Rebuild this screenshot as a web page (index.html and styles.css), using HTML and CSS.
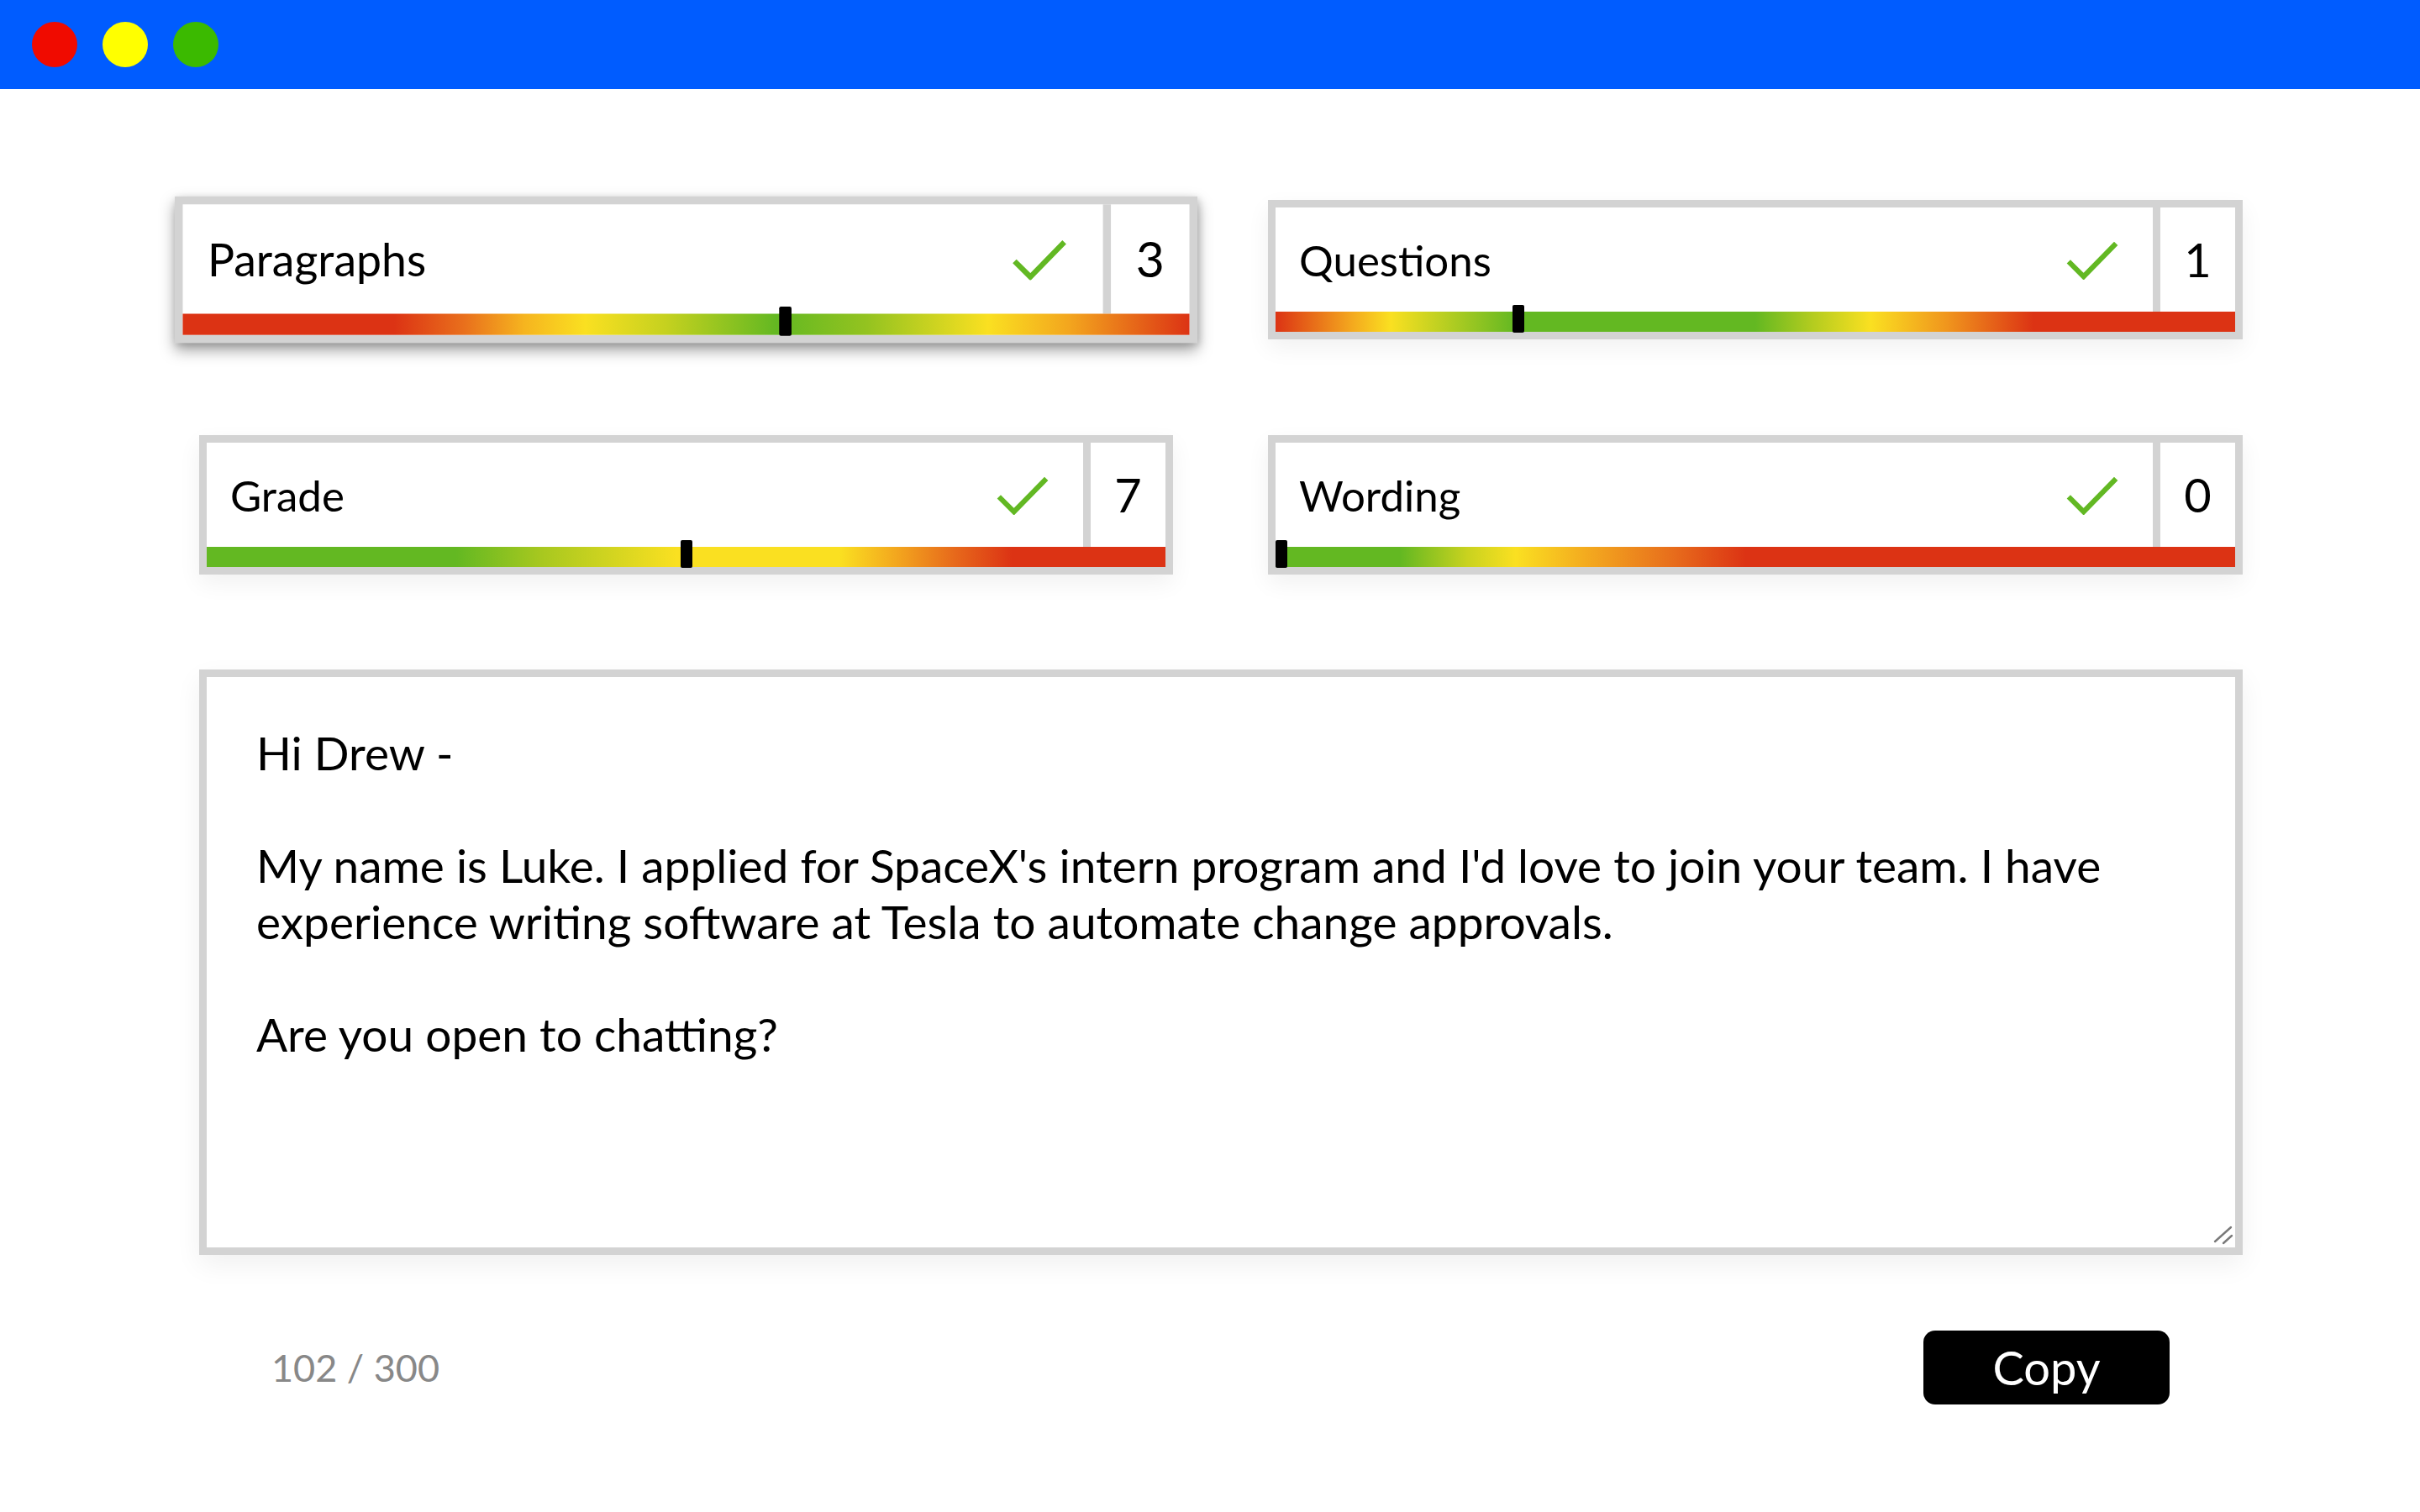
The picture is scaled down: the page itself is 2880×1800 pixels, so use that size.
FILE: index.html
```html
<!DOCTYPE html>
<html lang="en">
<head>
<meta charset="utf-8">
<title>Message checker</title>
<link rel="stylesheet" href="styles.css">
</head>
<body>
<header class="titlebar">
  <span class="dot dot-red"></span>
  <span class="dot dot-yellow"></span>
  <span class="dot dot-green"></span>
</header>
<main class="page">
  <section class="metrics">
    <div class="card card-active">
      <div class="card-top">
        <div class="label-cell">
          <span class="label">Paragraphs</span>
          <svg class="check" viewBox="0 0 66 50"><polyline points="3,27 22,46 63,4"/></svg>
        </div>
        <div class="num-cell">3</div>
      </div>
      <div class="bar bar-paragraphs"><span class="marker" style="--pos:0.6"></span></div>
    </div>
    <div class="card">
      <div class="card-top">
        <div class="label-cell">
          <span class="label">Questions</span>
          <svg class="check" viewBox="0 0 66 50"><polyline points="3,27 22,46 63,4"/></svg>
        </div>
        <div class="num-cell">1</div>
      </div>
      <div class="bar bar-questions"><span class="marker" style="--pos:0.25"></span></div>
    </div>
    <div class="card">
      <div class="card-top">
        <div class="label-cell">
          <span class="label">Grade</span>
          <svg class="check" viewBox="0 0 66 50"><polyline points="3,27 22,46 63,4"/></svg>
        </div>
        <div class="num-cell">7</div>
      </div>
      <div class="bar bar-grade"><span class="marker" style="--pos:0.5"></span></div>
    </div>
    <div class="card">
      <div class="card-top">
        <div class="label-cell">
          <span class="label">Wording</span>
          <svg class="check" viewBox="0 0 66 50"><polyline points="3,27 22,46 63,4"/></svg>
        </div>
        <div class="num-cell">0</div>
      </div>
      <div class="bar bar-wording"><span class="marker" style="--pos:0"></span></div>
    </div>
  </section>
  <div class="editor-wrap">
    <textarea class="editor" spellcheck="false">Hi Drew -

My name is Luke. I applied for SpaceX's intern program and I'd love to join your team. I have experience writing software at Tesla to automate change approvals.

Are you open to chatting?</textarea>
    <svg class="grip" viewBox="0 0 26 26"><line x1="2" y1="19" x2="21" y2="2"/><line x1="12" y1="21" x2="22" y2="12"/></svg>
  </div>
  <footer class="footer">
    <span class="count">102 / 300</span>
    <button class="copy-btn" type="button">Copy</button>
  </footer>
</main>
</body>
</html>
```

FILE: styles.css
```css
html, body {
  margin: 0;
  padding: 0;
  background: #ffffff;
}

body {
  font-family: Lato, "Open Sans", Arial, sans-serif;
  color: #000;
}

.titlebar {
  height: 106px;
  background: #005cff;
  display: flex;
  align-items: center;
  gap: 30px;
  padding-left: 38px;
  box-sizing: border-box;
}

.dot {
  width: 54px;
  height: 54px;
  border-radius: 50%;
  display: block;
}

.dot-red { background: #f00b00; }
.dot-yellow { background: #ffff00; }
.dot-green { background: #3bba00; }

.page {
  width: 2432px;
  margin-left: 237px;
  padding-top: 132px;
}

.metrics {
  display: grid;
  grid-template-columns: 1159px 1160px;
  column-gap: 113px;
  row-gap: 114px;
}

.card {
  height: 166px;
  box-sizing: border-box;
  border: 9px solid #d3d3d3;
  background: #fff;
  display: flex;
  flex-direction: column;
  box-shadow: 0 10px 26px rgba(0, 0, 0, 0.06);
}

.card-active {
  transform: scale(1.05);
  box-shadow: 0 8px 16px rgba(0, 0, 0, 0.36), 2px 3px 8px rgba(0, 0, 0, 0.15);
  position: relative;
  z-index: 1;
}

.card-top {
  flex: 1;
  display: flex;
}

.label-cell {
  flex: 1;
  display: flex;
  align-items: center;
  justify-content: space-between;
  padding: 0 41px 0 28px;
}

.label {
  font-size: 51px;
  line-height: 1;
}

.check {
  width: 62px;
  height: 47px;
  fill: none;
  stroke: #62b823;
  stroke-width: 6.5;
  stroke-linecap: butt;
  stroke-linejoin: miter;
}

.num-cell {
  width: 89px;
  border-left: 9px solid #d3d3d3;
  display: flex;
  align-items: center;
  justify-content: center;
  font-size: 56px;
  line-height: 1;
}

.bar {
  height: 24px;
  position: relative;
}

.marker {
  position: absolute;
  bottom: -1px;
  left: calc(var(--pos) * (100% - 14px));
  width: 14px;
  height: 33px;
  background: #000;
  border-radius: 2px;
}

.bar-paragraphs {
  background: linear-gradient(90deg, #dc3314 0%, #dc3314 21%, #e9701c 28%, #f6b51f 34%, #fae021 40%, #c5d11f 48%, #63b822 59%, #94c320 68%, #fae021 80%, #f3a61e 88%, #dc3314 100%);
}

.bar-questions {
  background: linear-gradient(90deg, #dc3314 0%, #f4a91e 8%, #fae021 12%, #63b822 25%, #63b822 50%, #b4cc1f 56%, #fae021 62%, #f0951d 70%, #dc3314 79%, #dc3314 100%);
}

.bar-grade {
  background: linear-gradient(90deg, #63b822 0%, #63b822 26%, #a8c81f 35%, #fae021 49%, #fae021 66%, #f3a61e 72%, #e7691b 78%, #dc3314 84%, #dc3314 100%);
}

.bar-wording {
  background: linear-gradient(90deg, #63b822 0%, #63b822 13%, #c9d21f 20%, #fae021 25%, #f4ad1f 32%, #e8701c 41%, #dc3314 49%, #dc3314 100%);
}

.editor-wrap {
  position: relative;
  margin-top: 113px;
  width: 2432px;
  height: 697px;
  box-shadow: 0 12px 30px rgba(0, 0, 0, 0.06);
}

.editor {
  display: block;
  width: 100%;
  height: 100%;
  box-sizing: border-box;
  border: 9px solid #d3d3d3;
  padding: 57px 59px;
  font-family: Lato, "Open Sans", Arial, sans-serif;
  font-size: 55px;
  line-height: 67px;
  color: #000;
  background: #fff;
  outline: none;
  resize: none;
  overflow: hidden;
}

.grip {
  position: absolute;
  right: 9px;
  bottom: 9px;
  width: 26px;
  height: 26px;
  stroke: #7a7a7a;
  stroke-width: 2.4;
  stroke-linecap: round;
  pointer-events: none;
}

.footer {
  display: flex;
  justify-content: space-between;
  align-items: center;
  padding: 0 87px 0 86px;
  margin-top: 90px;
}

.count {
  font-size: 45px;
  color: #888888;
}

.copy-btn {
  width: 293px;
  height: 88px;
  border: none;
  border-radius: 14px;
  background: #000;
  color: #fff;
  font-family: Lato, "Open Sans", Arial, sans-serif;
  font-size: 56px;
  line-height: 1;
  padding: 0;
  cursor: pointer;
}
```
